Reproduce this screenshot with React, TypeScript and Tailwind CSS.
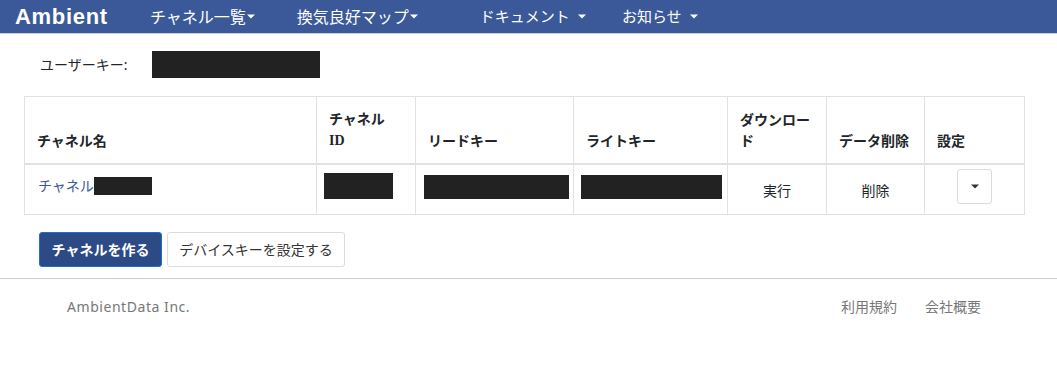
import React from "react";

const Caret = () => (
  <svg width="8" height="5" viewBox="0 0 8 5" className="inline-block">
    <path d="M0 0.5 L8 0.5 L4 4.5 Z" fill="currentColor" />
  </svg>
);

const Redacted = ({ className }: { className: string }) => (
  <span className={`inline-block bg-[#222222] ${className}`} />
);

const cols = "grid grid-cols-[292px_99px_158px_154px_99px_98px_100px]";

const App = () => {
  return (
    <div className="min-h-[376px] w-[1057px] bg-white font-['Noto_Sans','Noto_Sans_CJK_JP',sans-serif] text-[14px] text-[#212529]">
      {/* navbar */}
      <nav className="flex h-[34px] items-center border-b border-[#c9d1df] bg-[#3b5998] text-white">
        <span className="ml-[15px] w-[94px] font-['Liberation_Sans',sans-serif] text-[22px] leading-none font-bold tracking-[0.7px]">
          Ambient
        </span>
        <span className="ml-[41px] flex items-center gap-[1px] text-[16px] leading-none">
          チャネル一覧
          <Caret />
        </span>
        <span className="ml-[42px] flex items-center gap-[1px] text-[16px] leading-none">
          換気良好マップ
          <Caret />
        </span>
        <span className="ml-[62px] flex items-center gap-[8px] text-[15px] leading-none">
          ドキュメント
          <Caret />
        </span>
        <span className="ml-[36px] flex items-center gap-[8px] text-[15px] leading-none">
          お知らせ
          <Caret />
        </span>
      </nav>

      {/* user key */}
      <div className="mt-[17px] ml-[40px] flex h-[27px] items-center">
        <span className="w-[112px] leading-[21px]">ユーザーキー:</span>
        <Redacted className="h-[27px] w-[168px]" />
      </div>

      {/* channel table */}
      <div className="mt-[18px] ml-[24px] w-[1001px] border-t border-l border-[#dee2e6]">
        <div className={`${cols} font-bold leading-[21px]`}>
          {[
            <>チャネル名</>,
            <>
              チャネル
              <br />
              <span className="font-['Liberation_Serif',serif]">ID</span>
            </>,
            <>リードキー</>,
            <>ライトキー</>,
            <>ダウンロード</>,
            <>データ削除</>,
            <>設定</>,
          ].map((h, i) => (
            <div
              key={i}
              className="flex h-[68px] flex-col justify-end border-r border-b-2 border-[#dee2e6] px-[12px] pb-[12px]"
            >
              <div>{h}</div>
            </div>
          ))}
        </div>
        <div className={`${cols} h-[50px] leading-[21px]`}>
          <div className="border-r border-b border-[#dee2e6] pt-[10px] pl-[13px]">
            <span className="flex items-center text-[#3b5998]">
              チャネル
              <Redacted className="h-[18px] w-[58px]" />
            </span>
          </div>
          <div className="border-r border-b border-[#dee2e6] pt-[8px] pl-[7px]">
            <Redacted className="h-[26px] w-[69px]" />
          </div>
          <div className="border-r border-b border-[#dee2e6] pt-[10px] pl-[8px]">
            <Redacted className="h-[24px] w-[145px]" />
          </div>
          <div className="border-r border-b border-[#dee2e6] pt-[10px] pl-[7px]">
            <Redacted className="h-[24px] w-[141px]" />
          </div>
          <div className="border-r border-b border-[#dee2e6] pt-[15px] text-center">実行</div>
          <div className="border-r border-b border-[#dee2e6] pt-[15px] text-center">削除</div>
          <div className="flex justify-center border-r border-b border-[#dee2e6] pt-[4px]">
            <button className="flex h-[35px] w-[35px] items-center justify-center rounded-[3px] border border-[#dcdcdc] bg-white text-[#333]">
              <Caret />
            </button>
          </div>
        </div>
      </div>

      {/* actions */}
      <div className="mt-[17px] ml-[39px] flex gap-[5px]">
        <button className="h-[35px] w-[123px] rounded-[3px] border border-[#1f6fd0] bg-[#2c4a86] text-[14px] font-bold text-white">
          チャネルを作る
        </button>
        <button className="h-[35px] w-[178px] rounded-[3px] border border-[#dcdcdc] bg-white text-[14px] text-[#333]">
          デバイスキーを設定する
        </button>
      </div>

      <hr className="mt-[11px] border-t border-[#cccccc]" />

      {/* footer */}
      <footer className="mt-[17px] flex items-center justify-between pr-[76px] pl-[67px] text-[14px] leading-[21px] text-[#777777]">
        <span className="tracking-[0.55px]">AmbientData Inc.</span>
        <span className="flex gap-[28px]">
          <span>利用規約</span>
          <span>会社概要</span>
        </span>
      </footer>
    </div>
  );
};

export default App;
